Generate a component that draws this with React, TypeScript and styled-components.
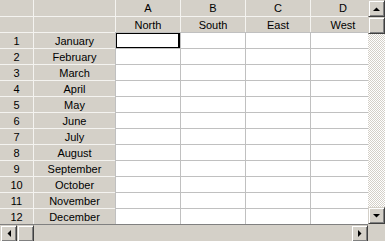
import React from "react";
import styled, { createGlobalStyle } from "styled-components";

const GlobalStyle = createGlobalStyle`
  html, body {
    margin: 0;
    padding: 0;
    background: #d4d0c8;
  }
`;

const Frame = styled.div`
  display: grid;
  grid-template-columns: 368px 17px;
  grid-template-rows: 224px 17px;
  width: 385px;
  height: 241px;
  overflow: hidden;
  font-family: "Liberation Sans", Arial, sans-serif;
  font-size: 11px;
  color: #000;
`;

const Sheet = styled.div`
  display: grid;
  grid-template-columns: 33px 82px 65px 65px 65px 65px;
  grid-auto-rows: 16px;
  overflow: hidden;
  background: #fff;
`;

const Cell = styled.div<{ $head?: boolean; $top?: boolean; $left?: boolean; $selected?: boolean }>`
  box-sizing: border-box;
  display: flex;
  align-items: center;
  justify-content: center;
  line-height: 15px;
  white-space: nowrap;
  overflow: hidden;
  position: relative;
  background: ${(p) => (p.$head ? "#d4d0c8" : "#fff")};
  border-top: ${(p) => (p.$top ? "none" : p.$head ? "1px solid #f4f3f0" : "1px solid #c0c0c0")};
  border-left: ${(p) => (p.$left ? "none" : p.$head ? "1px solid #f4f3f0" : "1px solid #c0c0c0")};
  padding-top: 1px;
`;

const Selection = styled.div`
  position: absolute;
  inset: -1px 0 -1px -1px;
  border: 2px solid #000;
  pointer-events: none;
`;

const VBar = styled.div`
  display: flex;
  flex-direction: column;
  background: repeating-conic-gradient(#ffffff 0 25%, #d4d0c8 0 50%) 0 0 / 2px 2px;
`;

const HBar = styled.div`
  display: flex;
  box-sizing: border-box;
  border-top: 1px solid #808080;
  background: #d4d0c8;
`;

const Corner = styled.div`
  background: #d4d0c8;
`;

const Button = styled.div`
  box-sizing: border-box;
  width: 17px;
  height: 17px;
  flex: none;
  display: flex;
  align-items: center;
  justify-content: center;
  background: #d4d0c8;
  border-top: 1px solid #d4d0c8;
  border-left: 1px solid #d4d0c8;
  border-right: 1px solid #404040;
  border-bottom: 1px solid #404040;
  box-shadow: inset 1px 1px #ffffff, inset -1px -1px #808080;
`;

const Track = styled.div`
  flex: 1;
`;

type Dir = "up" | "down" | "left" | "right";

const arrowPoints: Record<Dir, string> = {
  up: "0,4 7,4 3.5,0.5",
  down: "0,0 7,0 3.5,3.5",
  left: "4,0 4,7 0.5,3.5",
  right: "0,0 0,7 3.5,3.5",
};

function Arrow({ dir }: { dir: Dir }) {
  const vertical = dir === "up" || dir === "down";
  return (
    <svg width={vertical ? 7 : 4} height={vertical ? 4 : 7} viewBox={vertical ? "0 0 7 4" : "0 0 4 7"}>
      <polygon points={arrowPoints[dir]} fill="#000" />
    </svg>
  );
}

const letters = ["A", "B", "C", "D"];
const regions = ["North", "South", "East", "West"];
const months = [
  "January",
  "February",
  "March",
  "April",
  "May",
  "June",
  "July",
  "August",
  "September",
  "October",
  "November",
  "December",
];

export default function App() {
  return (
    <>
      <GlobalStyle />
      <Frame>
        <Sheet>
          <Cell $head $top $left />
          <Cell $head $top />
          {letters.map((l) => (
            <Cell key={l} $head $top>
              {l}
            </Cell>
          ))}

          <Cell $head $left />
          <Cell $head />
          {regions.map((r) => (
            <Cell key={r} $head>
              {r}
            </Cell>
          ))}

          {months.map((m, i) => (
            <React.Fragment key={m}>
              <Cell $head $left>
                {i + 1}
              </Cell>
              <Cell $head>{m}</Cell>
              {letters.map((l, j) => (
                <Cell key={l}>{i === 0 && j === 0 && <Selection />}</Cell>
              ))}
            </React.Fragment>
          ))}
        </Sheet>

        <VBar>
          <Button>
            <Arrow dir="up" />
          </Button>
          <Button />
          <Track />
          <Button>
            <Arrow dir="down" />
          </Button>
        </VBar>

        <HBar>
          <Button>
            <Arrow dir="left" />
          </Button>
          <Button />
          <Track />
          <Button>
            <Arrow dir="right" />
          </Button>
        </HBar>
        <Corner />
      </Frame>
    </>
  );
}
